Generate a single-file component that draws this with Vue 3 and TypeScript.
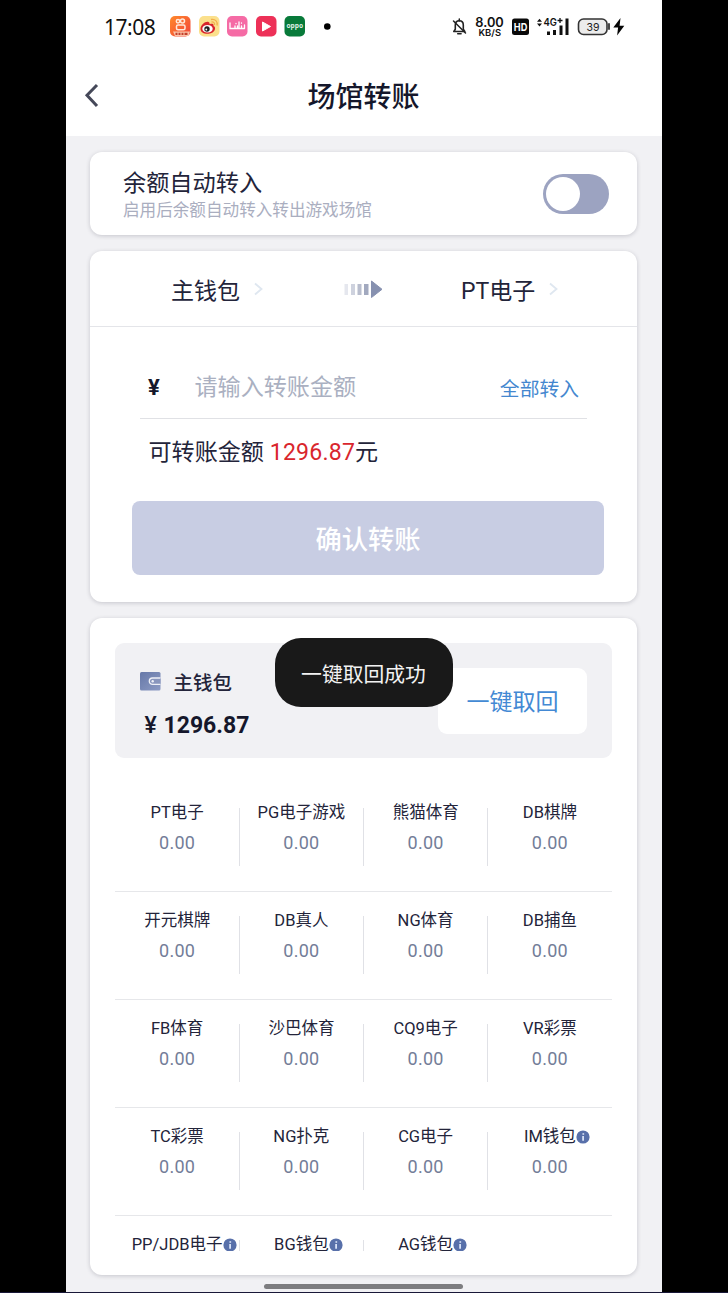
<script setup lang="ts">
interface Venue {
  name: string
  info?: boolean
}

const rows: Venue[][] = [
  [{ name: 'PT电子' }, { name: 'PG电子游戏' }, { name: '熊猫体育' }, { name: 'DB棋牌' }],
  [{ name: '开元棋牌' }, { name: 'DB真人' }, { name: 'NG体育' }, { name: 'DB捕鱼' }],
  [{ name: 'FB体育' }, { name: '沙巴体育' }, { name: 'CQ9电子' }, { name: 'VR彩票' }],
  [{ name: 'TC彩票' }, { name: 'NG扑克' }, { name: 'CG电子' }, { name: 'IM钱包', info: true }],
  [{ name: 'PP/JDB电子', info: true }, { name: 'BG钱包', info: true }, { name: 'AG钱包', info: true }],
]
</script>

<template>
  <div class="screen">
    <div class="phone">
      <header class="top">
        <div class="status">
          <span class="clock">17:08</span>
          <svg class="apps" width="170" height="24" viewBox="0 0 170 24">
            <defs>
              <linearGradient id="ks" x1="0" y1="0" x2="1" y2="1">
                <stop offset="0" stop-color="#ff8a2a" />
                <stop offset="1" stop-color="#f2433c" />
              </linearGradient>
            </defs>
            <rect x="1" y="2" width="20.5" height="20.5" rx="5" fill="url(#ks)" />
            <g fill="none" stroke="#ffe9dc" stroke-width="1.5">
              <circle cx="9" cy="7.200" r="1.700" />
              <circle cx="13.500" cy="7" r="2" />
              <rect x="7.500" y="11" width="8.500" height="4.800" rx="1.500" />
            </g>
            <path d="M4 17.500h17l-1.500 4.500H6z" fill="#fbc4a8" />
            <path d="M6.500 19.800h2m1 0h2m1 0h2m1 0h3" stroke="#c4402c" stroke-width="2.300" />
            <rect x="30" y="2" width="20.500" height="20.500" rx="5" fill="#fbe08c" />
            <path d="M31.500 15c0-4 5-8 8-7 1.500.5 1 2 1 2s5-1.500 4 2c3 1 2 7-5 7.800-4 .4-8-1.300-8-4.800z" fill="#d8252c" />
            <ellipse cx="38.500" cy="14.800" rx="5.200" ry="3.800" fill="#fff" />
            <circle cx="38" cy="15" r="2.700" fill="#222" />
            <circle cx="37.300" cy="15.500" r=".9" fill="#fff" />
            <path d="M42 5.500c4-1 7 2 6 6M42.500 8c2-.3 3.500 1 3 3" fill="none" stroke="#f2b04c" stroke-width="1.300" />
            <rect x="58" y="2" width="20.500" height="20.500" rx="5" fill="#f56ba5" />
            <path d="M61 9v5.500h3M66 12v2.500h2.500V12M70 8v6.500h2.500V12M75.500 11v3.500M61 14.500h14.500M67 9.500v.2M72.500 9v.2" fill="none" stroke="#fff" stroke-width="1.300" stroke-linecap="round" />
            <rect x="87" y="2" width="20.500" height="20.500" rx="5" fill="#ed3158" />
            <path d="M93.500 8v9l8-4.500z" fill="#fff" stroke="#fff" stroke-linejoin="round" />
            <rect x="115.500" y="2" width="20.500" height="20.500" rx="5" fill="#087a3a" />
            <text x="117.500" y="14.300" class="oppo" textLength="16.500" lengthAdjust="spacingAndGlyphs">oppo</text>
            <circle cx="158.300" cy="12.500" r="3.300" fill="#000" />
          </svg>
          <svg class="system" width="180" height="28" viewBox="0 0 180 28">
            <path d="M3.800 18.500h11l-1.500-2.200v-4.200c0-2.400-1.500-4.300-4-4.300s-4 1.900-4 4.300v4.200z" fill="none" stroke="#222" stroke-width="1.600" stroke-linejoin="round" />
            <path d="M7.700 20.800h3.400M9.300 6v2M3.500 8l12 12" stroke="#222" stroke-width="1.500" stroke-linecap="round" />
            <text x="25.300" y="13.800" class="rate" textLength="28.500" lengthAdjust="spacingAndGlyphs">8.00</text>
            <text x="28.500" y="23" class="unit" textLength="22.500" lengthAdjust="spacingAndGlyphs">KB/S</text>
            <rect x="62" y="5.500" width="17" height="16.500" rx="2.500" fill="#090909" />
            <text x="63.800" y="18" class="hd" textLength="13.500" lengthAdjust="spacingAndGlyphs">HD</text>
            <path d="M87 8.800l2.500-3 2.500 3zM87 10.600l2.500 3 2.500-3z" fill="#111" />
            <text x="93.500" y="13.300" class="gen" textLength="13.500" lengthAdjust="spacingAndGlyphs">4G</text>
            <path d="M107.500 7.500h5M110 5v5" stroke="#111" stroke-width="1.300" />
            <path d="M98.500 18.500v3.500M104.500 17v5M111 12.500v9.500M117 5.500v16.500" stroke="#111" stroke-width="3" />
            <rect x="128.500" y="6" width="28.500" height="15.500" rx="5" fill="#ececec" stroke="#333" stroke-width="1.600" />
            <path d="M159 11v5" stroke="#333" stroke-width="1.800" stroke-linecap="round" />
            <text x="136.500" y="17.800" class="level" textLength="13" lengthAdjust="spacingAndGlyphs">39</text>
            <path d="M170.500 5l-7.200 9.500h4.800l-1 8 7.200-9.700h-4.700z" fill="#050505" />
          </svg>
        </div>
        <div class="titlebar">
          <svg class="back" width="18" height="28" viewBox="0 0 18 28">
            <path d="M14 4L4 14.200 14 25" fill="none" stroke="#454859" stroke-width="3" />
          </svg>
          <h1>场馆转账</h1>
        </div>
      </header>

      <main>
        <section class="card auto">
          <div>
            <div class="auto-title">余额自动转入</div>
            <div class="auto-note">启用后余额自动转入转出游戏场馆</div>
          </div>
          <div class="switch"><i></i></div>
        </section>

        <section class="card transfer">
          <div class="route">
            <div class="from">主钱包
              <svg width="12" height="16" viewBox="0 0 12 16"><path d="M2 2.500l6.500 5.500L2 13.500" /></svg>
            </div>
            <svg class="arrow" width="42" height="22" viewBox="0 0 42 22">
              <rect x="1.500" y="6" width="3.500" height="11" fill="#e5e7ee" />
              <rect x="8" y="6" width="4" height="11" fill="#ced2de" />
              <rect x="14.500" y="6" width="4" height="11" fill="#b8bdcd" />
              <rect x="21" y="6" width="4.500" height="11" fill="#a2a9bf" />
              <path d="M28.500 3L39 11.300l-10.500 8.200z" fill="#8791b0" stroke="#8791b0" stroke-linejoin="round" />
            </svg>
            <div class="to">PT电子
              <svg width="12" height="16" viewBox="0 0 12 16"><path d="M2 2.500l6.500 5.500L2 13.500" /></svg>
            </div>
          </div>
          <div class="amount">
            <span class="yen">¥</span>
            <span class="placeholder">请输入转账金额</span>
            <span class="all">全部转入</span>
          </div>
          <div class="available">可转账金额 <b>1296.87</b>元</div>
          <button class="confirm">确认转账</button>
        </section>

        <section class="card venues">
          <div class="wallet">
            <div>
              <div class="wallet-name">
                <svg width="22" height="20" viewBox="0 0 22 20">
                  <defs>
                    <linearGradient id="wl" x1="0" y1="0" x2="1" y2="1">
                      <stop offset="0" stop-color="#6678a8" />
                      <stop offset="1" stop-color="#8d9bc4" />
                    </linearGradient>
                  </defs>
                  <rect x="0" y="0" width="20.500" height="18.500" rx="1.500" fill="url(#wl)" />
                  <path d="M20.500 6h-8a3.200 3.200 0 0 0 0 6.400h8" fill="#8996bd" stroke="#eef0f7" stroke-width="1.300" />
                  <circle cx="12.700" cy="9.200" r="1.200" fill="#eef0f7" />
                </svg>
                <span>主钱包</span>
              </div>
              <div class="balance"><span>¥</span>1296.87</div>
            </div>
            <button class="recall">一键取回</button>
          </div>
          <div class="grid">
            <div v-for="(row, i) in rows" :key="i" class="row">
              <div v-for="venue in row" :key="venue.name" class="cell">
                <div class="name">
                  <span>{{ venue.name }}<svg v-if="venue.info" width="14" height="14" viewBox="0 0 14 14">
                    <circle cx="7" cy="7" r="6.600" fill="#5870aa" />
                    <path d="M7.300 3.300v1.500M7.100 6v4.700" fill="none" stroke="#dfe9fb" stroke-width="1.700" />
                  </svg></span>
                </div>
                <div v-if="i < rows.length - 1" class="value">0.00</div>
              </div>
            </div>
          </div>
        </section>
      </main>
      <div class="toast">一键取回成功</div>
      <div class="home"></div>
    </div>
  </div>
</template>

<style>
body {
  background: #000;
}
</style>

<style scoped>
.screen {
  box-sizing: border-box;
  height: 1293px;
  overflow: hidden;
  background: #000;
  border-bottom: 1px solid #191838;
  font-family: Roboto, "Noto Sans CJK SC", sans-serif;
  color: #23243a;
}
.phone {
  position: relative;
  width: 596px;
  height: 1292px;
  margin-left: 65.500px;
  background: #f1f1f4;
}
.top {
  height: 136px;
  background: #fff;
}
.status {
  display: flex;
  height: 56px;
  padding-top: 14px;
  box-sizing: border-box;
}
.clock {
  width: 64px;
  margin-left: 38.500px;
  font: 21px/26px "Noto Sans", sans-serif;
  letter-spacing: -0.5px;
  color: #111;
}
.apps {
  margin-left: 0.500px;
}
.system {
  margin: -1px 0 0 111.500px;
}
.oppo {
  font: 700 7px "Open Sans", sans-serif;
  fill: #dff0e6;
}
.rate {
  font: 600 12.500px Inter, sans-serif;
  fill: #111;
}
.unit {
  font: 600 9px Inter, sans-serif;
  fill: #111;
}
.hd {
  font: 700 11px Inter, sans-serif;
  fill: #fff;
}
.gen {
  font: 600 10.500px Inter, sans-serif;
  fill: #111;
}
.level {
  font: 11px Inter, sans-serif;
  fill: #222;
}
.titlebar {
  display: grid;
  grid-template-columns: 60px 1fr 60px;
  align-items: center;
  height: 80px;
}
.back {
  margin: -2px 0 0 17.500px;
}
h1 {
  margin: 4px 0 0;
  text-align: center;
  font-size: 28px;
  line-height: 40px;
  font-weight: 500;
  color: #15172b;
}
main {
  display: flex;
  flex-direction: column;
  gap: 16px;
  padding: 16px 24.500px 0;
}
.card {
  box-sizing: border-box;
  background: #fff;
  border-radius: 12px;
  box-shadow: 0 1px 4px rgba(50, 50, 70, 0.22);
}
.auto {
  display: flex;
  justify-content: space-between;
  height: 83px;
  padding: 14px 28px 0 33px;
}
.auto-title {
  padding-top: 1px;
  font-size: 23.200px;
  line-height: 32px;
}
.auto-note {
  font-size: 16.600px;
  line-height: 23px;
  color: #aaaebf;
}
.switch {
  box-sizing: border-box;
  width: 66px;
  height: 40px;
  margin-top: 8px;
  padding: 3px;
  border-radius: 20px;
  background: #9ca3c1;
}
.switch i {
  display: block;
  width: 34px;
  height: 34px;
  border-radius: 50%;
  background: #fff;
}
.transfer {
  height: 350.500px;
}
.route {
  display: flex;
  box-sizing: border-box;
  height: 76px;
  padding-top: 23.500px;
  border-bottom: 1.500px solid #e4e5e9;
  font-size: 23px;
  line-height: 33px;
}
.from {
  width: 171px;
  padding-left: 81px;
}
.from svg,
.to svg {
  margin-left: 7px;
  vertical-align: 1.500px;
  fill: none;
  stroke: #dfe7f0;
  stroke-width: 1.800;
}
.arrow {
  margin: 3.500px 0 0 0.500px;
}
.to {
  padding-left: 76.500px;
  white-space: nowrap;
}
.amount {
  display: flex;
  box-sizing: border-box;
  height: 92px;
  margin: 0 50px;
  padding: 44px 8px 0;
  border-bottom: 1.500px solid #e0e1e5;
  line-height: 34px;
}
.yen {
  width: 46.500px;
  margin-top: -0.500px;
  font-size: 22px;
  font-weight: 700;
  color: #15172b;
}
.placeholder {
  flex: 1;
  font-size: 23.100px;
  color: #aab0c1;
}
.all {
  margin-top: 2px;
  font-size: 19.800px;
  color: #4487cf;
}
.available {
  margin: 17px 0 0 58.500px;
  font-size: 23.100px;
  line-height: 34px;
}
.available b {
  font-weight: 400;
  letter-spacing: 0.200px;
  color: #d9262d;
}
.confirm {
  display: block;
  width: 472px;
  height: 74.500px;
  margin: 30.500px 0 0 42px;
  border: 0;
  border-radius: 8px;
  background: #c8cde3;
  color: #fff;
  padding: 4px 0 0;
  font: 500 26.300px/70px Roboto, "Noto Sans CJK SC", sans-serif;
}
.venues {
  height: 657.500px;
  padding: 25px 25px 0;
}
.wallet {
  display: flex;
  justify-content: space-between;
  box-sizing: border-box;
  height: 115.500px;
  padding: 25px 25px 0;
  border-radius: 9px;
  background: #f1f1f4;
}
.wallet-name {
  display: flex;
  align-items: center;
  gap: 11.500px;
  height: 28px;
  font-size: 19.500px;
  font-weight: 500;
}
.balance {
  margin: 15px 0 0 4.500px;
  font-size: 23px;
  line-height: 30px;
  font-weight: 700;
  color: #15172b;
}
.balance span {
  display: inline-block;
  width: 19px;
  font-weight: 500;
}
.recall {
  width: 149px;
  height: 66px;
  padding: 3px 0 0;
  border: 0;
  border-radius: 9px;
  background: #fff;
  color: #4389d4;
  font: 23px/63px Roboto, "Noto Sans CJK SC", sans-serif;
}
.grid {
  height: 467px;
  margin-top: 25.500px;
  overflow: hidden;
}
.row {
  display: grid;
  grid-template-columns: repeat(4, 1fr);
  box-sizing: border-box;
  height: 108px;
  padding-top: 17.500px;
  border-bottom: 1px solid #e6e7ea;
}
.cell {
  position: relative;
  text-align: center;
}
.cell:not(:last-child)::after {
  content: "";
  position: absolute;
  top: 6.500px;
  right: -0.500px;
  width: 1px;
  height: 58px;
  background: #e0e1e6;
}
.name {
  font-size: 16.500px;
  line-height: 24px;
  white-space: nowrap;
}
.name span {
  position: relative;
}
.name svg {
  position: absolute;
  left: 100%;
  top: 3px;
}
.value {
  margin-top: 5.500px;
  font-size: 18px;
  line-height: 24px;
  color: #737d98;
  letter-spacing: 0.3px;
}
.toast {
  position: absolute;
  left: 209px;
  top: 638px;
  width: 178px;
  height: 69px;
  border-radius: 26px;
  background: #191919;
  color: #f2f2f2;
  text-align: center;
  font-size: 20.800px;
  line-height: 74px;
}
.home {
  position: absolute;
  left: 198.500px;
  top: 1284px;
  width: 199px;
  height: 5px;
  border-radius: 3px;
  background: #7d7d80;
}
</style>
